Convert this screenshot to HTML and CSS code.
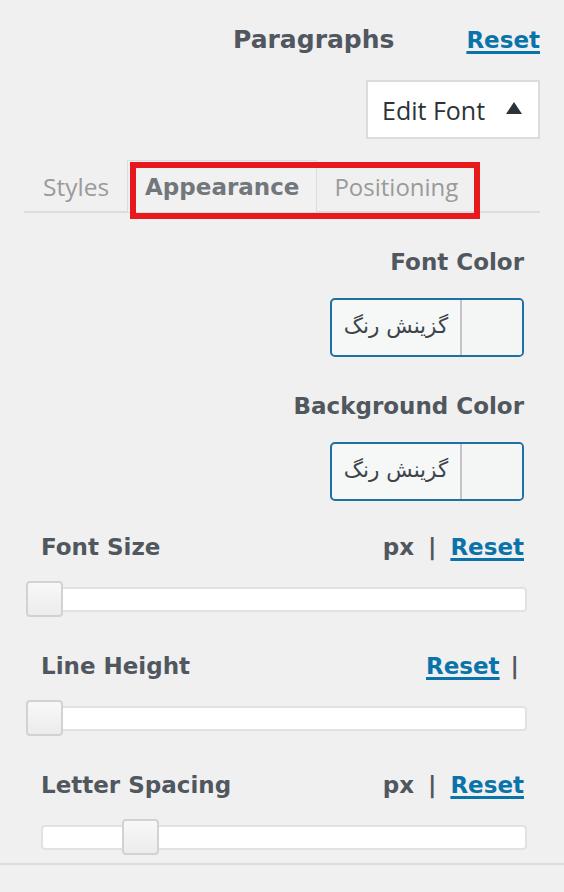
FILE: index.html
```html
<!DOCTYPE html>
<html lang="en">
<head>
<meta charset="utf-8">
<title>Paragraphs</title>
<link rel="stylesheet" href="styles.css">
</head>
<body>
<div class="panel">
  <div class="header">
    <span class="title">Paragraphs</span>
    <a class="link" href="#">Reset</a>
  </div>
  <div class="edit-row">
    <button class="edit-btn"><span>Edit Font</span><span class="tri"></span></button>
  </div>
  <div class="tabs">
    <span class="tab">Styles</span>
    <span class="tab active">Appearance</span>
    <span class="tab">Positioning</span>
    <span class="highlight"></span>
  </div>

  <div class="color-field">
    <div class="label">Font Color</div>
    <div class="picker"><span class="picker-text" dir="rtl">گزینش رنگ</span><span class="swatch"></span></div>
  </div>
  <div class="color-field">
    <div class="label">Background Color</div>
    <div class="picker"><span class="picker-text" dir="rtl">گزینش رنگ</span><span class="swatch"></span></div>
  </div>

  <div class="slider-field">
    <div class="row"><span class="label">Font Size</span><span class="meta"><span>px</span><span class="bar">|</span><a class="link" href="#">Reset</a></span></div>
    <div class="slider"><div class="track"></div><div class="handle" style="left:0px"></div></div>
  </div>
  <div class="slider-field">
    <div class="row"><span class="label">Line Height</span><span class="meta lh"><a class="link" href="#">Reset</a><span class="bar">|</span></span></div>
    <div class="slider"><div class="track"></div><div class="handle" style="left:0px"></div></div>
  </div>
  <div class="slider-field">
    <div class="row"><span class="label">Letter Spacing</span><span class="meta"><span>px</span><span class="bar">|</span><a class="link" href="#">Reset</a></span></div>
    <div class="slider narrow"><div class="track"></div><div class="handle" style="left:81px"></div></div>
  </div>
  <div class="footer"></div>
</div>
</body>
</html>
```
FILE: styles.css
```css
html, body {
  margin: 0;
  padding: 0;
  background: #f0f0f0;
}
body {
  font-family: "DejaVu Sans", sans-serif;
  color: #50575e;
}
.panel {
  width: 564px;
  height: 892px;
  overflow: hidden;
}
.header {
  display: flex;
  justify-content: flex-end;
  align-items: baseline;
  gap: 72px;
  padding: 23px 24px 0 0;
  line-height: 34px;
}
.title {
  font-weight: bold;
  font-size: 25px;
  color: #50575e;
}
.link {
  font-weight: bold;
  font-size: 23px;
  color: #0a73aa;
  text-decoration: underline;
  text-decoration-thickness: 3px;
  text-underline-offset: 3px;
}
.edit-row {
  display: flex;
  justify-content: flex-end;
  padding-right: 24px;
  margin-top: 23px;
}
.edit-btn {
  box-sizing: border-box;
  width: 174px;
  height: 59px;
  display: flex;
  align-items: center;
  justify-content: space-between;
  padding: 0 16px 0 14px;
  background: #fff;
  border: 2px solid #dcdcde;
  font-family: "Open Sans", sans-serif;
  font-size: 25px;
  color: #2c3338;
}
.tri {
  width: 0;
  height: 0;
  border-left: 8px solid transparent;
  border-right: 8px solid transparent;
  border-bottom: 12px solid #2c3338;
  margin-top: -4px;
}
.tabs {
  position: relative;
  display: flex;
  margin: 21px 24px 0 24px;
  border-bottom: 2px solid #dcdcde;
  height: 51px;
}
.tab {
  display: flex;
  align-items: center;
  box-sizing: border-box;
  height: 52px;
  padding: 0 17px 0 18px;
  font-family: "Open Sans", sans-serif;
  font-size: 24.5px;
  color: #9a9a9a;
  border: 1px solid transparent;
  border-bottom: none;
}
.tab.active {
  font-family: "DejaVu Sans", sans-serif;
  font-weight: bold;
  font-size: 23px;
  color: #72777c;
  border-color: #dcdcde;
  background: #f1f1f1;
  padding: 0 17px 0 17px;
}
.tab.active + .tab {
  border-left: none;
  padding-left: 17px;
  font-size: 24px;
}
.highlight {
  position: absolute;
  left: 106px;
  top: 2px;
  width: 350px;
  height: 57px;
  box-sizing: border-box;
  border: 6px solid #e8191c;
}
.color-field {
  display: flex;
  flex-direction: column;
  align-items: flex-end;
  padding-right: 40px;
}
.label {
  font-weight: bold;
  font-size: 23px;
  line-height: 30px;
  color: #50575e;
}
.color-field .label {
  margin-top: 34px;
}
.picker {
  margin-top: 21px;
  box-sizing: border-box;
  width: 194px;
  height: 59px;
  display: flex;
  border: 2px solid #1e6fa3;
  border-radius: 5px;
  background: #f6f7f7;
  overflow: hidden;
}
.picker-text {
  width: 130px;
  box-sizing: border-box;
  display: flex;
  align-items: center;
  justify-content: center;
  font-family: "DejaVu Sans", sans-serif;
  font-size: 21.5px;
  color: #3c434a;
  border-right: 2px solid #c3c4c7;
  padding-bottom: 4px;
}
.swatch {
  flex: 1;
  background: #f4f5f5;
}
.slider-field .row {
  display: flex;
  justify-content: space-between;
  align-items: baseline;
  padding: 0 40px 0 41px;
}
.slider-field {
  margin-top: 34px;
}
.color-field + .slider-field {
  margin-top: 31px;
}
.meta {
  display: flex;
  align-items: baseline;
  font-weight: bold;
  font-size: 23px;
  line-height: 30px;
  gap: 14px;
}
.meta.lh {
  gap: 11px;
  margin-right: 5px;
}
.slider {
  position: relative;
  height: 36px;
  margin: 19px 37px 0 26px;
}
.slider.narrow {
  margin-left: 41px;
}
.track {
  box-sizing: border-box;
  position: relative;
  top: 6px;
  height: 25px;
  background: #fff;
  border: 2px solid #e2e2e2;
  border-radius: 4px;
}
.handle {
  position: absolute;
  top: 0;
  box-sizing: border-box;
  width: 37px;
  height: 36px;
  border: 2px solid #d2d2d2;
  border-radius: 4px;
  background: linear-gradient(#f8f8f8, #ececec);
}
.footer {
  margin-top: 8px;
  border-top: 2px solid #dcdcde;
}
```
